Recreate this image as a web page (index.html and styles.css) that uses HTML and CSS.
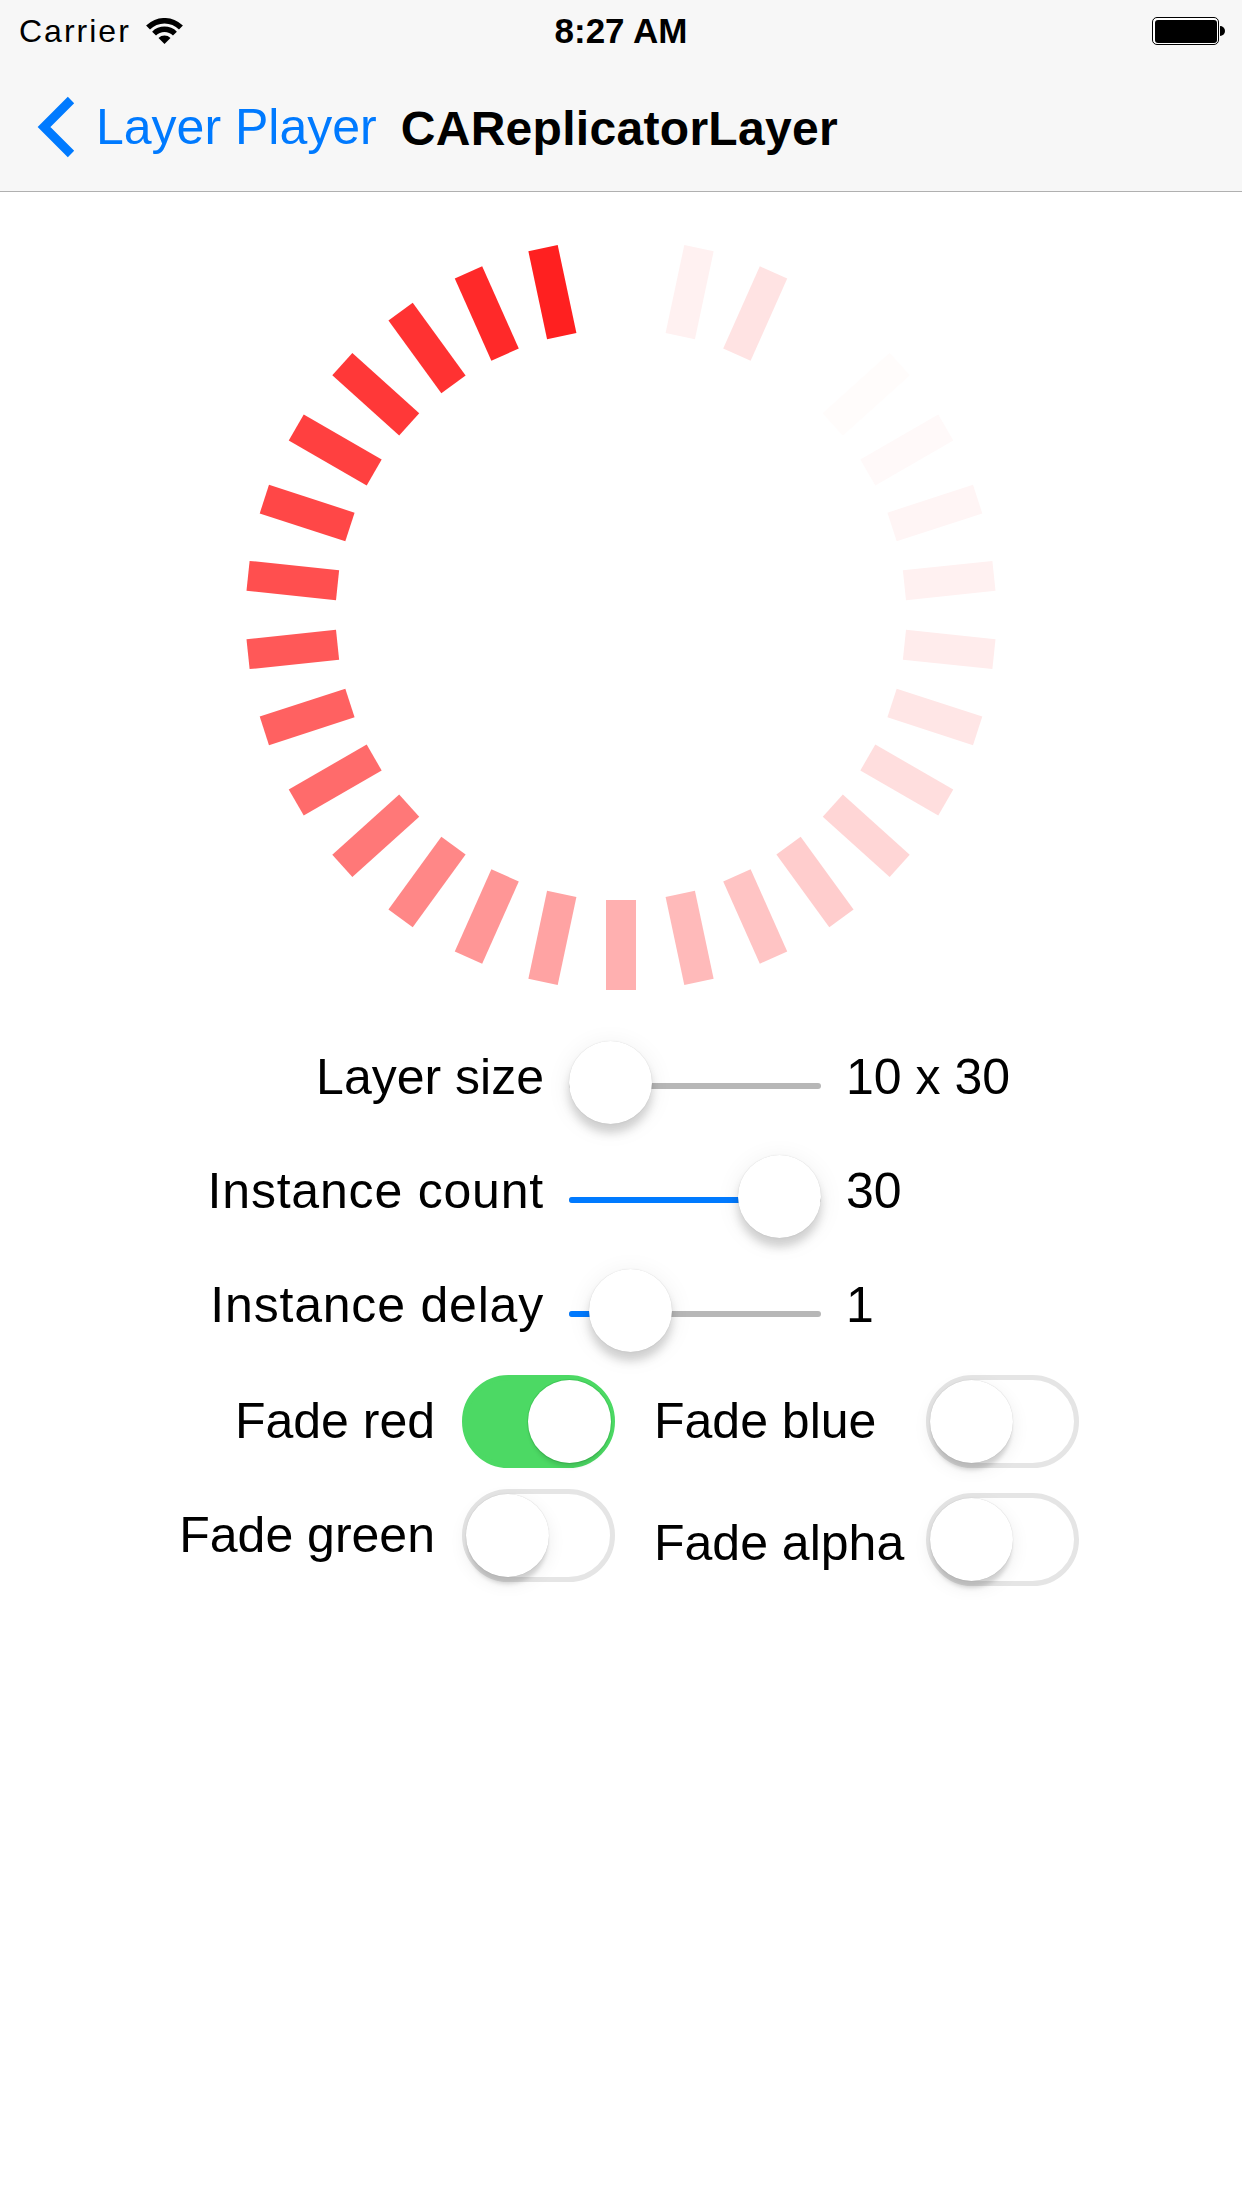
FILE: index.html
```html
<!DOCTYPE html>
<html lang="en">
<head>
<meta charset="utf-8">
<title>CAReplicatorLayer</title>
<link rel="stylesheet" href="styles.css">
</head>
<body>
<header class="top">
  <div class="status">
    <div class="status-left">
      <span class="carrier">Carrier</span>
      <svg class="wifi" viewBox="0 0 37 26" aria-hidden="true">
        <path d="M0.1 7.6 A26 26 0 0 1 36.9 7.6 L33 11.5 A20.5 20.5 0 0 0 4 11.5 Z"/>
        <path d="M6.13 13.63 A17.5 17.5 0 0 1 30.87 13.63 L26.99 17.51 A12 12 0 0 0 10.01 17.51 Z"/>
        <path d="M12.49 19.99 A8.5 8.5 0 0 1 24.51 19.99 L18.5 26 Z"/>
      </svg>
    </div>
    <div class="time">8:27 AM</div>
    <div class="status-right">
      <div class="battery">
        <div class="battery-body"><div class="battery-fill"></div></div>
        <div class="battery-nub"></div>
      </div>
    </div>
  </div>
  <nav class="navbar">
    <svg class="chevron" viewBox="0 0 38 62" aria-hidden="true">
      <polyline points="34,4 7,31 34,58"/>
    </svg>
    <span class="back-label">Layer Player</span>
    <span class="nav-title">CAReplicatorLayer</span>
  </nav>
</header>

<main class="content">
  <div class="replicator">
    <div class="bar" style="transform:rotate(0deg);background:transparent"></div>
    <div class="bar" style="transform:rotate(12deg);background:#fff1f1"></div>
    <div class="bar" style="transform:rotate(24deg);background:#ffe3e3"></div>
    <div class="bar" style="transform:rotate(36deg);background:transparent"></div>
    <div class="bar" style="transform:rotate(48deg);background:#fffcfb"></div>
    <div class="bar" style="transform:rotate(60deg);background:#fff9f9"></div>
    <div class="bar" style="transform:rotate(72deg);background:#fff5f5"></div>
    <div class="bar" style="transform:rotate(84deg);background:#fff1f1"></div>
    <div class="bar" style="transform:rotate(96deg);background:#ffecec"></div>
    <div class="bar" style="transform:rotate(108deg);background:#ffe6e6"></div>
    <div class="bar" style="transform:rotate(120deg);background:#ffdede"></div>
    <div class="bar" style="transform:rotate(132deg);background:#ffd6d6"></div>
    <div class="bar" style="transform:rotate(144deg);background:#ffcdcd"></div>
    <div class="bar" style="transform:rotate(156deg);background:#ffc4c4"></div>
    <div class="bar" style="transform:rotate(168deg);background:#ffbaba"></div>
    <div class="bar" style="transform:rotate(180deg);background:#ffb0b0"></div>
    <div class="bar" style="transform:rotate(192deg);background:#ffa3a3"></div>
    <div class="bar" style="transform:rotate(204deg);background:#ff9696"></div>
    <div class="bar" style="transform:rotate(216deg);background:#ff8787"></div>
    <div class="bar" style="transform:rotate(228deg);background:#ff7878"></div>
    <div class="bar" style="transform:rotate(240deg);background:#ff6b6b"></div>
    <div class="bar" style="transform:rotate(252deg);background:#ff6161"></div>
    <div class="bar" style="transform:rotate(264deg);background:#ff5858"></div>
    <div class="bar" style="transform:rotate(276deg);background:#ff4f4f"></div>
    <div class="bar" style="transform:rotate(288deg);background:#ff4747"></div>
    <div class="bar" style="transform:rotate(300deg);background:#ff4040"></div>
    <div class="bar" style="transform:rotate(312deg);background:#ff3838"></div>
    <div class="bar" style="transform:rotate(324deg);background:#ff3232"></div>
    <div class="bar" style="transform:rotate(336deg);background:#ff2929"></div>
    <div class="bar" style="transform:rotate(348deg);background:#ff2020"></div>
  </div>

  <div class="sliders">
    <div class="label">Layer size</div>
    <div class="slider">
      <div class="track"><div class="track-fill" style="width:0px"></div></div>
      <div class="knob" style="left:0px"></div>
    </div>
    <div class="value">10 x 30</div>

    <div class="label wide">Instance count</div>
    <div class="slider">
      <div class="track"><div class="track-fill" style="width:210px"></div></div>
      <div class="knob" style="left:169px"></div>
    </div>
    <div class="value">30</div>

    <div class="label wide">Instance delay</div>
    <div class="slider">
      <div class="track"><div class="track-fill" style="width:60px"></div></div>
      <div class="knob" style="left:20px"></div>
    </div>
    <div class="value">1</div>
  </div>

  <div class="switches">
    <div class="sw-label sw-label-left">Fade red</div>
    <div class="sw-cell"><div class="switch on"><div class="thumb"></div></div></div>
    <div class="sw-label sw-label-right">Fade blue</div>
    <div class="sw-cell"><div class="switch"><div class="thumb"></div></div></div>

    <div class="sw-label sw-label-left">Fade green</div>
    <div class="sw-cell"><div class="switch"><div class="thumb"></div></div></div>
    <div class="sw-label sw-label-right lower">Fade alpha</div>
    <div class="sw-cell lower"><div class="switch"><div class="thumb"></div></div></div>
  </div>
</main>
</body>
</html>
```

FILE: styles.css
```css
html, body {
  margin: 0;
  padding: 0;
  background: #ffffff;
}

body {
  width: 1242px;
  min-height: 2208px;
  font-family: "Liberation Sans", Arial, sans-serif;
  color: #000;
}

/* ---------- top bars ---------- */
.top {
  background: #f7f7f7;
}

.status {
  box-sizing: border-box;
  height: 60px;
  padding-top: 2px;
  display: grid;
  grid-template-columns: 1fr auto 1fr;
  align-items: center;
}

.status-left {
  display: flex;
  align-items: center;
  padding-left: 19px;
}

.carrier {
  font-size: 32px;
  line-height: 36px;
  letter-spacing: 2px;
}

.wifi {
  width: 37px;
  height: 26px;
  margin-left: 15px;
  fill: #000;
}

.time {
  font-size: 35px;
  font-weight: bold;
  line-height: 36px;
}

.status-right {
  justify-self: end;
  padding-right: 17px;
  display: flex;
  align-items: center;
}

.battery {
  display: flex;
  align-items: center;
}

.battery-body {
  box-sizing: border-box;
  width: 67px;
  height: 28px;
  border: 1px solid #000;
  border-radius: 5px;
  padding: 1.5px;
  background: #fff;
}

.battery-fill {
  width: 100%;
  height: 100%;
  background: #000;
  border-radius: 3px;
}

.battery-nub {
  width: 5px;
  height: 10px;
  margin-left: 1px;
  background: #000;
  border-radius: 0 5px 5px 0;
}

.navbar {
  box-sizing: border-box;
  height: 132px;
  padding-top: 2px;
  padding-left: 37px;
  border-bottom: 1px solid #b0b0b0;
  display: flex;
  align-items: center;
}

.chevron {
  width: 38px;
  height: 62px;
  fill: none;
  stroke: #007aff;
  stroke-width: 9;
  stroke-linejoin: miter;
  stroke-linecap: butt;
}

.back-label {
  margin-left: 21px;
  font-size: 50px;
  line-height: 60px;
  color: #007aff;
}

.nav-title {
  margin-left: 24px;
  margin-top: 4px;
  font-size: 48px;
  line-height: 60px;
  font-weight: bold;
  letter-spacing: 0.3px;
}

/* ---------- replicator ---------- */
.replicator {
  position: relative;
  width: 750px;
  height: 750px;
  margin: 48px auto 0;
}

.bar {
  position: absolute;
  left: 360px;
  top: 0;
  width: 30px;
  height: 90px;
  transform-origin: 15px 375px;
}

/* ---------- sliders ---------- */
.sliders {
  margin-top: 30px;
  display: grid;
  grid-template-columns: 569px 252px auto;
  grid-auto-rows: 114px;
}

.label,
.value,
.sw-label {
  font-size: 50px;
  line-height: 114px;
  white-space: nowrap;
}

.label {
  text-align: right;
  padding-right: 25px;
}

.label.wide {
  letter-spacing: 0.8px;
}

.value {
  padding-left: 25px;
}

.slider {
  position: relative;
  height: 114px;
}

.track {
  position: absolute;
  left: 0;
  right: 0;
  top: 63px;
  height: 6px;
  border-radius: 3px;
  background: #b7b7b7;
  overflow: hidden;
}

.track-fill {
  height: 100%;
  background: #007aff;
}

.knob {
  position: absolute;
  top: 21px;
  width: 83px;
  height: 83px;
  border-radius: 50%;
  background: #fff;
  box-shadow: 0 9px 10px rgba(0, 0, 0, 0.16),
              0 0 1px rgba(0, 0, 0, 0.18),
              0 4px 26px rgba(0, 0, 0, 0.07);
}

/* ---------- switches ---------- */
.switches {
  margin-top: 2px;
  display: grid;
  grid-template-columns: 462px 153px 311px 153px;
  grid-auto-rows: 114px;
}

.sw-label-left {
  text-align: right;
  padding-right: 27px;
}

.sw-label-right {
  padding-left: 39px;
}

.sw-cell {
  display: flex;
  align-items: center;
}

.lower {
  padding-top: 8px;
  box-sizing: border-box;
}

.switch {
  position: relative;
  box-sizing: border-box;
  width: 153px;
  height: 93px;
  border-radius: 47px;
  border: 5px solid #e5e5e5;
  background: #fff;
}

.switch .thumb {
  position: absolute;
  top: 0;
  left: -1px;
  width: 83px;
  height: 83px;
  border-radius: 50%;
  background: #fff;
  box-shadow: 0 9px 4px -2px rgba(0, 0, 0, 0.14),
              0 0 1px rgba(0, 0, 0, 0.22),
              0 6px 18px rgba(0, 0, 0, 0.08);
}

.switch.on {
  background: #4cd964;
  border-color: #4cd964;
}

.switch.on .thumb {
  left: 61px;
  box-shadow: 0 6px 4px -2px rgba(0, 0, 0, 0.12),
              0 0 0 1px rgba(40, 170, 60, 0.35);
}
```
